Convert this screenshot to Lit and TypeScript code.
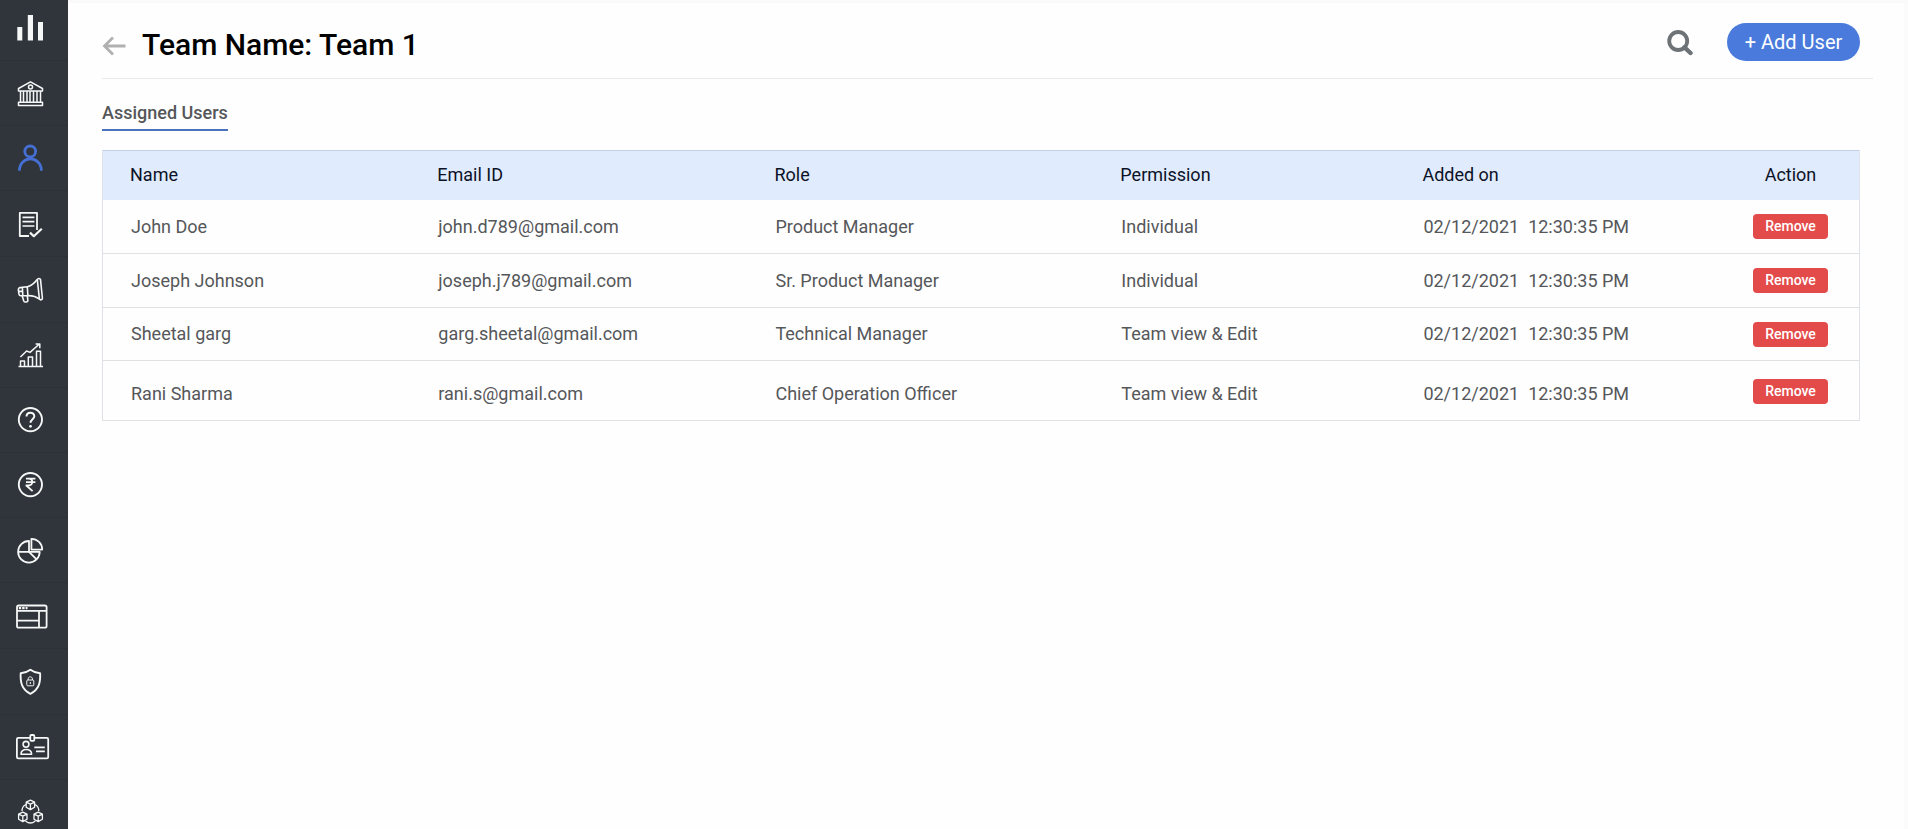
import { LitElement, html, css, svg, SVGTemplateResult } from "lit";
import { customElement, state } from "lit/decorators.js";
import { classMap } from "lit/directives/class-map.js";

interface NavItem {
  label: string;
  icon: SVGTemplateResult;
  active?: boolean;
  tall?: boolean;
}

interface User {
  name: string;
  email: string;
  role: string;
  permission: string;
  date: string;
  time: string;
}

const cube = (x: number, y: number) => svg`
  <path d="M${x} ${y - 4.6}l4.2 2v5l-4.2 2.4l-4.2-2.4v-5zM${x - 4.2} ${y - 2.6}l4.2 2l4.2-2M${x} ${y - 0.6}v5.2"/>`;

const NAV: NavItem[] = [
  {
    label: "Dashboard",
    icon: svg`<g fill="currentColor" stroke="none"><rect x="5.3" y="15" width="5" height="13.5"/><rect x="15.8" y="3" width="5.2" height="25.5"/><rect x="26" y="10" width="5" height="18.5"/></g>`,
  },
  {
    label: "Bank",
    icon: svg`<g stroke-width="1.5"><path d="M6.5 11.5L18.5 4.8L30.5 11.5V14H6.5z"/><circle cx="18.5" cy="10" r="2"/><path d="M8.5 14V25M11.5 14V25M15 14V25M18 14V25M21.5 14V25M25 14V25M28.5 14V25M6.5 25.3H30.5V28.6H6.5z"/></g>`,
  },
  {
    label: "Users",
    active: true,
    icon: svg`<g stroke-width="2.8"><circle cx="18.2" cy="9.4" r="5.4"/><path d="M7.4 28.8C7.4 13 29.4 13 29.4 28.8"/></g>`,
  },
  {
    label: "Tasks",
    tall: true,
    icon: svg`<g stroke-width="1.8"><path d="M17 28H7.8V4.8H25V22"/><path d="M10.5 9.4H22.4M10.5 13.6H22.4M10.5 18H22.4" stroke-width="1.6"/><path d="M18 24.6L21.8 28.2L29.8 20.8" stroke-width="2.2"/></g>`,
  },
  {
    label: "Campaigns",
    tall: true,
    icon: svg`<g stroke-width="1.6"><path d="M15.3 12.8C19.5 11.5 23 8.500 25.200 5.500C25.800 4.200 28.100 4 28.500 5.500L30.400 24C30.500 26 28.200 26.400 27.500 25.200C24.500 22.700 20.500 21.500 15.900 21.600"/><path d="M15.300 12.800L8 13.600C6.500 14 6.300 15 6.400 16.200L6.900 20C7.100 21.500 8 21.900 9.200 21.800L15.900 21.600zM10.400 13.400L10.800 21.700M6.600 17.400H10.500M25.300 5.500L27.400 25"/><path d="M10.200 22L11.800 27C12.400 28.600 15.800 28.300 15.900 26.800L15.300 21.700"/></g>`,
  },
  {
    label: "Analytics",
    icon: svg`<g stroke-width="1.5"><path d="M6.500 27.500H31M8.500 27.500V22H12.500V27.500M16.300 27.500V18H20.500V27.500M24.500 27.500V12.200H28.500V27.500"/><path d="M8.400 18L14.600 12L18 13.400L27.400 5M23.600 5H27.800V9.200"/></g>`,
  },
  {
    label: "Help",
    icon: svg`<circle cx="18.400" cy="15.600" r="11.600" stroke-width="1.900"/><path d="M14.500 12.600C14.500 7.200 22.300 7.500 22.300 12.300C22.300 15 18.500 15.400 18.500 18.800" stroke-width="2"/><circle cx="18.500" cy="22.300" r="1.400" fill="currentColor" stroke="none"/>`,
  },
  {
    label: "Payments",
    icon: svg`<circle cx="18.400" cy="15.600" r="11.600" stroke-width="1.900"/><path d="M14 9.700H23.400M14 13.200H23.400M14 9.700H16.500C21.600 9.700 21.600 16.500 16.500 16.500H14.300L20.600 22.200" stroke-width="1.800"/>`,
  },
  {
    label: "Reports",
    icon: svg`<g stroke-width="1.800"><path d="M17 7A10.800 10.800 0 1 0 27.700 17.800H17z"/><path d="M6.300 17.800H17L24.600 25.400"/><path d="M19.400 4.800V15.600H30.200A10.800 10.800 0 0 0 19.400 4.800z"/></g>`,
  },
  {
    label: "Pages",
    tall: true,
    icon: svg`<g stroke-width="1.800"><rect x="5" y="5.500" width="29.600" height="22.200" rx="1.800"/><path d="M5 10.800H34.600M27 10.800V27.700M5 20.600H27"/><path d="M6.800 8.200H15.500" stroke-width="2.200" stroke-dasharray="2.400 1"/></g>`,
  },
  {
    label: "Security",
    tall: true,
    icon: svg`<path d="M18.400 3.800C15.500 6 12.200 7 8.700 7.200C8.200 16.500 9.800 23.600 18.400 27.800C27 23.600 28.600 16.500 28.100 7.200C24.600 7 21.300 6 18.400 3.800z" stroke-width="1.900"/><g stroke-width="1"><rect x="14.800" y="14" width="7" height="5.800" rx="1"/><path d="M16.200 14V12.800C16.200 10.200 20.400 10.200 20.400 12.800V14M18.300 16V18"/></g>`,
  },
  {
    label: "ID cards",
    icon: svg`<g stroke-width="1.800"><path d="M18 6.800H6.200Q4.900 6.800 4.900 8.200V26Q4.900 27.400 6.200 27.400H34.800Q36.200 27.400 36.200 26V8.200Q36.200 6.800 34.800 6.800H22.600"/><rect x="18.300" y="4" width="4" height="5.800" rx="1"/><circle cx="14" cy="13.300" r="2.900" stroke-width="1.600"/><path d="M9 23.200C8.600 17 20 17 19.600 23.200z" stroke-width="1.600"/><path d="M22.300 16.400H32.800M24 20.400H32.800" stroke-width="1.600"/></g>`,
  },
  {
    label: "Modules",
    icon: svg`<g stroke-width="1.300">${cube(18.4, 8.8)}${cube(10.8, 20.8)}${cube(26.2, 20.8)}<path d="M14 8.500C11.500 9.500 10 12 10 15M22.800 8.500C25.300 9.500 26.800 12 26.800 15M13.500 25C16.500 27.500 20.300 27.500 23.300 25"/></g>`,
  },
];

@customElement("side-nav")
export class SideNav extends LitElement {
  static styles = css`
    :host {
      display: block;
      overflow: hidden;
      background: #30353b;
    }
    .list {
      list-style: none;
      margin: 0;
      padding: 0;
      margin-top: -4px;
    }
    .link {
      box-sizing: border-box;
      display: flex;
      align-items: center;
      height: 65px;
      padding-left: 12px;
      color: #f6f7f7;
      border-bottom: 1px solid #2c3136;
    }
    .tall {
      height: 66px;
    }
    .active {
      color: #466fd3;
    }
    .icon {
      width: 36px;
      height: 32px;
      overflow: visible;
      fill: none;
      stroke: currentColor;
      stroke-linejoin: round;
    }
  `;

  render() {
    return html`
      <nav aria-label="Main">
        <ul class="list">
          ${NAV.map(
            (item) => html`<li>
              <a
                class=${classMap({ link: true, tall: !!item.tall, active: !!item.active })}
                href="#"
                aria-label=${item.label}
              >
                <svg class="icon" viewBox="0 0 36 32" aria-hidden="true">${item.icon}</svg>
              </a>
            </li>`
          )}
        </ul>
      </nav>
    `;
  }
}

@customElement("user-table")
export class UserTable extends LitElement {
  @state() private users: User[] = [
    { name: "John Doe", email: "john.d789@gmail.com", role: "Product Manager", permission: "Individual", date: "02/12/2021", time: "12:30:35 PM" },
    { name: "Joseph Johnson", email: "joseph.j789@gmail.com", role: "Sr. Product Manager", permission: "Individual", date: "02/12/2021", time: "12:30:35 PM" },
    { name: "Sheetal garg", email: "garg.sheetal@gmail.com", role: "Technical Manager", permission: "Team view & Edit", date: "02/12/2021", time: "12:30:35 PM" },
    { name: "Rani Sharma", email: "rani.s@gmail.com", role: "Chief Operation Officer", permission: "Team view & Edit", date: "02/12/2021", time: "12:30:35 PM" },
  ];

  static styles = css`
    :host {
      display: block;
    }
    .table {
      box-sizing: border-box;
      width: 100%;
      table-layout: fixed;
      border-collapse: separate;
      border-spacing: 0;
      border: 1px solid #dfe2e6;
      border-top: 0;
      border-bottom: 0;
      font-size: 18px;
      line-height: 24px;
    }
    .c-name { width: 17.5%; }
    .c-email { width: 19.2%; }
    .c-role { width: 19.7%; }
    .c-permission { width: 17.2%; }
    .c-added { width: 18.6%; }
    .c-action { width: 7.8%; }
    .head {
      box-sizing: border-box;
      height: 50px;
      padding: 0 0 2px 27px;
      text-align: left;
      font-weight: 400;
      color: #0c1226;
      background: #e0ebfd;
      border-top: 1px solid #c3d0e4;
    }
    .cell {
      box-sizing: border-box;
      height: 54px;
      padding: 0 0 0 28px;
      color: #55575a;
      border-bottom: 1px solid #dfe2e4;
      white-space: pre;
    }
    .row:nth-child(3) .cell {
      height: 53px;
    }
    .row:last-child .cell {
      height: 60px;
      padding-top: 6px;
    }
    .row:last-child .action {
      padding-top: 2px;
    }
    .action {
      padding-left: 0;
      text-align: center;
    }
    .remove {
      display: block;
      width: 75px;
      height: 25px;
      margin: 0 auto;
      padding: 0;
      border: 0;
      border-radius: 4px;
      background: #e34a4a;
      color: #fff;
      font: 500 14px/25px Roboto, sans-serif;
      cursor: pointer;
    }
  `;

  private remove(user: User) {
    this.users = this.users.filter((u) => u !== user);
  }

  render() {
    return html`
      <table class="table">
        <colgroup>
          <col class="c-name" /><col class="c-email" /><col class="c-role" />
          <col class="c-permission" /><col class="c-added" /><col class="c-action" />
        </colgroup>
        <thead>
          <tr>
            <th class="head" scope="col">Name</th>
            <th class="head" scope="col">Email ID</th>
            <th class="head" scope="col">Role</th>
            <th class="head" scope="col">Permission</th>
            <th class="head" scope="col">Added on</th>
            <th class="head action" scope="col">Action</th>
          </tr>
        </thead>
        <tbody>
          ${this.users.map(
            (u) => html`<tr class="row">
              <td class="cell">${u.name}</td>
              <td class="cell">${u.email}</td>
              <td class="cell">${u.role}</td>
              <td class="cell">${u.permission}</td>
              <td class="cell">${u.date}  ${u.time}</td>
              <td class="cell action"><button class="remove" type="button" @click=${() => this.remove(u)}>Remove</button></td>
            </tr>`
          )}
        </tbody>
      </table>
    `;
  }
}

@customElement("app-root")
export class AppRoot extends LitElement {
  static styles = css`
    :host {
      display: grid;
      grid-template-columns: 68px minmax(0, 1fr);
      height: 100vh;
      background: #fefefe;
      font-family: Roboto, sans-serif;
    }
    .main {
      box-sizing: border-box;
      border-top: 3px solid #fafafa;
      border-right: 4px solid #fbfbfb;
      padding: 0 31px 0 34px;
      overflow: auto;
    }
    .bar {
      box-sizing: border-box;
      display: flex;
      align-items: center;
      height: 76px;
      padding: 2px 13px 0 0;
      border-bottom: 1px solid #e9eaeb;
    }
    .back {
      display: flex;
      margin: 8px 16px 0 0;
      color: #b0b0b0;
    }
    .title {
      flex: 1;
      margin: 6px 0 0;
      font-size: 30px;
      line-height: 36px;
      font-weight: 500;
      color: #000;
    }
    .search {
      display: flex;
      margin: 0 34px 0 0;
      padding: 3px 0 0;
      border: 0;
      background: none;
      color: #6c7275;
      cursor: pointer;
    }
    .add {
      height: 38px;
      width: 133px;
      padding: 0;
      border: 0;
      border-radius: 19px;
      background: #4a7bdc;
      color: #fff;
      font: 400 20px/38px Roboto, sans-serif;
      cursor: pointer;
    }
    .tabs {
      display: flex;
      padding: 22px 0 19px;
    }
    .tab {
      padding: 0 0 4px;
      border-bottom: 2px solid #4a72bd;
      color: #55575a;
      font-size: 18px;
      line-height: 24px;
      font-weight: 500;
      text-decoration: none;
    }
    .table-wrap {
      padding-right: 13px;
    }
  `;

  render() {
    return html`
      <side-nav></side-nav>
      <main class="main">
        <header class="bar">
          <a class="back" href="#" aria-label="Back">
            <svg width="24" height="20" viewBox="0 0 24 20" fill="none" stroke="currentColor" stroke-width="2.8" aria-hidden="true">
              <path d="M23.500 10H2.500M11 1.500L2.500 10L11 18.500" />
            </svg>
          </a>
          <h1 class="title">Team Name: Team 1</h1>
          <button class="search" type="button" aria-label="Search">
            <svg width="26" height="26" viewBox="0 0 26 26" fill="none" stroke="currentColor" aria-hidden="true">
              <circle cx="11.200" cy="11" r="9" stroke-width="3.800" />
              <path d="M17.500 17.300L23.500 23" stroke-width="4.400" stroke-linecap="round" />
            </svg>
          </button>
          <button class="add" type="button">+ Add User</button>
        </header>
        <nav class="tabs" aria-label="Team sections">
          <a class="tab" href="#" aria-current="page">Assigned Users</a>
        </nav>
        <div class="table-wrap"><user-table></user-table></div>
      </main>
    `;
  }
}
